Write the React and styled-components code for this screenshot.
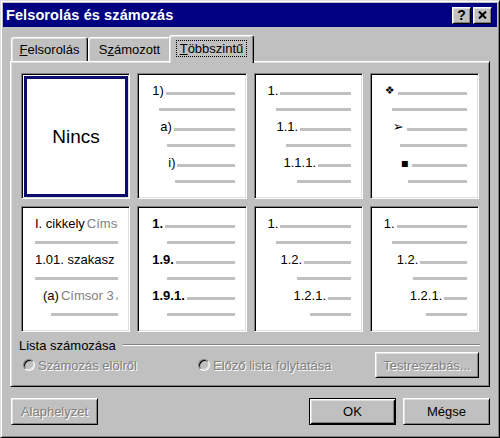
import React from "react";
import styled, { createGlobalStyle, css } from "styled-components";

const GlobalStyle = createGlobalStyle`
	html, body {
		margin: 0;
		padding: 0;
		background: #c0c0c0;
	}

	body {
		font-family: "Liberation Sans", Arial, sans-serif;
		font-size: 13px;
		color: #000;
	}
`;

const raised = css`
	background: #c0c0c0;
	border: 1px solid;
	border-color: #fff #000 #000 #fff;
	box-shadow: inset 1px 1px #dfdfdf, inset -1px -1px #808080;
	box-sizing: border-box;
`;

const disabledText = css`
	color: #808080;
	text-shadow: 1px 1px 0 #fff;
`;

const Window = styled.div`
	width: 500px;
	height: 438px;
	box-sizing: border-box;
	background: #c0c0c0;
	border: 1px solid;
	border-color: #dfdfdf #000 #000 #dfdfdf;
	box-shadow: inset 1px 1px #fff, inset -1px -1px #808080;
	padding: 2px;
	display: flex;
	flex-direction: column;
`;

const TitleBar = styled.div`
	height: 24px;
	background: #000080;
	color: #fff;
	display: flex;
	align-items: center;
	padding: 0 5px 0 3px;

	.caption {
		font-weight: 700;
		font-size: 14.5px;
		letter-spacing: 0.1px;
	}

	.buttons {
		margin-left: auto;
		display: flex;
		gap: 2px;
	}
`;

const CaptionButton = styled.div`
	${raised};
	width: 19px;
	height: 17px;
	display: flex;
	align-items: center;
	justify-content: center;
	color: #000;
	font-weight: 700;
	font-size: 14px;
	line-height: 1;
`;

const Body = styled.div`
	flex: 1;
	display: flex;
	flex-direction: column;
	padding: 8px 7px 8px 7px;
`;

const TabStrip = styled.div`
	height: 26px;
	display: flex;
	align-items: flex-end;
	padding-left: 1px;
`;

const Tab = styled.div`
	width: ${props => props.$w}px;
	height: ${props => props.$active ? 28 : 24}px;
	margin: ${props => props.$active ? "0 -2px -2px" : "0"};
	position: relative;
	z-index: ${props => props.$active ? 2 : 1};
	box-sizing: border-box;
	background: #c0c0c0;
	border-top: 1px solid #fff;
	border-left: 1px solid #fff;
	border-right: 1px solid #000;
	border-radius: 3px 3px 0 0;
	box-shadow: inset -1px 0 #808080, inset 1px 1px #dfdfdf;
	display: flex;
	align-items: center;
	justify-content: center;
	padding-bottom: ${props => props.$active ? 2 : 0}px;

	.focus {
		border: 1px dotted #000;
		padding: 0 3px;
		line-height: 15px;
	}
`;

const Panel = styled.div`
	border: 1px solid;
	border-color: #fff #000 #000 #fff;
	box-shadow: inset 1px 1px #dfdfdf, inset -1px -1px #808080;
	padding: 11px 10px 8px;
	display: flex;
	flex-direction: column;
`;

const Grid = styled.div`
	display: grid;
	grid-template-columns: repeat(4, 1fr);
	grid-auto-rows: 126px;
	gap: 7px;
`;

const Cell = styled.div`
	background: #fff;
	border: 1px solid;
	border-color: #808080 #fff #fff #808080;
	box-shadow: inset 1px 1px #000, inset -1px -1px #dfdfdf;
	box-sizing: border-box;
	padding: 9px 11px 0 0;
	display: flex;
	flex-direction: column;
	overflow: hidden;
`;

const NoneCell = styled(Cell)`
	padding: 0;
`;

const SelectedFrame = styled.div`
	flex: 1;
	margin: 2px 1px 1px 2px;
	border: 3px solid #0c0c6e;
	display: flex;
	align-items: center;
	justify-content: center;
	font-size: 19px;
`;

const Row = styled.div`
	height: 16px;
	display: flex;
	align-items: center;
	padding-left: ${props => props.$indent}px;
	margin-bottom: ${props => props.$gap ? 4 : 0}px;
	white-space: nowrap;
	overflow: hidden;
	line-height: 16px;
	font-size: 13px;
`;

const Label = styled.span`
	margin-right: 2px;
	font-weight: ${props => props.$bold ? 700 : 400};
	${props => props.$symbol && css`
		font-family: "DejaVu Sans", sans-serif;
		font-size: ${props.$symbol}px;
		margin-right: 3px;
	`}
`;

const Hint = styled.span`
	color: #808080;
	margin-right: 2px;
`;

const Line = styled.div`
	flex: 1;
	min-width: 4px;
	height: 3px;
	margin-top: 4px;
	background: #c0c0c0;
`;

const GroupHeader = styled.div`
	height: 14px;
	margin: 6px -1px 0 -2px;
	display: flex;
	align-items: center;

	.rule {
		flex: 1;
		margin-left: 7px;
		height: 1px;
		background: #808080;
		border-bottom: 1px solid #fff;
	}
`;

const Options = styled.div`
	height: 26px;
	display: flex;
	align-items: center;
	padding-left: 2px;
`;

const RadioOption = styled.div`
	width: ${props => props.$w ? `${props.$w}px` : "auto"};
	flex: ${props => props.$w ? "none" : 1};
	display: flex;
	align-items: center;
	gap: 3px;
	${disabledText};
`;

const RadioCircle = styled.span`
	width: 12px;
	height: 12px;
	box-sizing: border-box;
	border-radius: 50%;
	border: 1px solid;
	border-color: #808080 #fff #fff #808080;
	box-shadow: inset 1px 1px #000, inset -1px -1px #dfdfdf;
	background: #c0c0c0;
	display: flex;
	align-items: center;
	justify-content: center;

	::after {
		content: "";
		width: 4px;
		height: 4px;
		border-radius: 50%;
		background: ${props => props.$checked ? "#808080" : "transparent"};
	}
`;

const Button = styled.div`
	${raised};
	width: ${props => props.$w}px;
	height: ${props => props.$h}px;
	display: flex;
	align-items: center;
	justify-content: center;
	font-size: 13px;
	${props => props.$disabled && disabledText};
	${props => props.$default && css`
		border-color: #000;
		box-shadow: inset 1px 1px #fff, inset -1px -1px #000, inset 2px 2px #dfdfdf, inset -2px -2px #808080;
	`}
`;

const Footer = styled.div`
	margin-top: 11px;
	display: flex;
	gap: 7px;
	padding-left: 1px;

	.spacer {
		flex: 1;
	}
`;

const previews = [
	[
		{i: 14, label: "1)"}, {i: 21}, {i: 22, label: "a)"}, {i: 29}, {i: 30, label: "i)"}, {i: 37},
	],
	[
		{i: 13, label: "1."}, {i: 21}, {i: 22, label: "1.1."}, {i: 31}, {i: 29, label: "1.1.1."}, {i: 42},
	],
	[
		{i: 14, label: "❖", symbol: 11}, {i: 21}, {i: 22, label: "➢", symbol: 13}, {i: 29}, {i: 30, label: "▪", symbol: 12}, {i: 37},
	],
	[
		{i: 13, label: "I. cikkely", hint: "Címsor 1", noLine: true}, {i: 13},
		{i: 13, label: "1.01. szakasz", noLine: true}, {i: 13},
		{i: 21, label: "(a)", hint: "Címsor 3"}, {i: 29},
	],
	[
		{i: 14, label: "1.", bold: true}, {i: 29}, {i: 14, label: "1.9.", bold: true}, {i: 29}, {i: 14, label: "1.9.1.", bold: true}, {i: 29},
	],
	[
		{i: 13, label: "1."}, {i: 21}, {i: 26, label: "1.2."}, {i: 42}, {i: 39, label: "1.2.1."}, {i: 55},
	],
	[
		{i: 13, label: "1."}, {i: 21}, {i: 26, label: "1.2."}, {i: 42}, {i: 39, label: "1.2.1."}, {i: 55},
	],
];

const Preview = ({rows}) => (
	<Cell>
		{rows.map((r, n) => (
			<Row key={n} $indent={r.i} $gap={n % 2 === 1}>
				{r.label && <Label $bold={r.bold} $symbol={r.symbol}>{r.label}</Label>}
				{r.hint && <Hint>{r.hint}</Hint>}
				{!r.noLine && <Line/>}
			</Row>
		))}
	</Cell>
);

const App = () => {
	return (
		<>
			<GlobalStyle/>
			<Window>
				<TitleBar>
					<span className={"caption"}>Felsorolás és számozás</span>
					<div className={"buttons"}>
						<CaptionButton>?</CaptionButton>
						<CaptionButton>
							<svg width="9" height="8" viewBox="0 0 9 8">
								<path d="M1 0.5 L8 7.5 M8 0.5 L1 7.5" stroke="#000" strokeWidth="2"/>
							</svg>
						</CaptionButton>
					</div>
				</TitleBar>
				<Body>
					<TabStrip>
						<Tab $w={77}><span><u>F</u>elsorolás</span></Tab>
						<Tab $w={83}><span>S<u>z</u>ámozott</span></Tab>
						<Tab $w={85} $active><span className={"focus"}><u>T</u>öbbszintű</span></Tab>
					</TabStrip>
					<Panel>
						<Grid>
							<NoneCell>
								<SelectedFrame>Nincs</SelectedFrame>
							</NoneCell>
							{previews.map((rows, n) => <Preview key={n} rows={rows}/>)}
						</Grid>
						<GroupHeader>
							<span>Lista számozása</span>
							<div className={"rule"}/>
						</GroupHeader>
						<Options>
							<RadioOption $w={175}>
								<RadioCircle $checked/>
								<span>Számozás elölről</span>
							</RadioOption>
							<RadioOption>
								<RadioCircle/>
								<span>Előző lista folytatása</span>
							</RadioOption>
							<Button $w={104} $h={26} $disabled>Testreszabás...</Button>
						</Options>
					</Panel>
					<Footer>
						<Button $w={87} $h={27} $disabled>Alaphelyzet</Button>
						<div className={"spacer"}/>
						<Button $w={87} $h={27} $default>OK</Button>
						<Button $w={87} $h={27}>Mégse</Button>
					</Footer>
				</Body>
			</Window>
		</>
	);
};

export default App;
